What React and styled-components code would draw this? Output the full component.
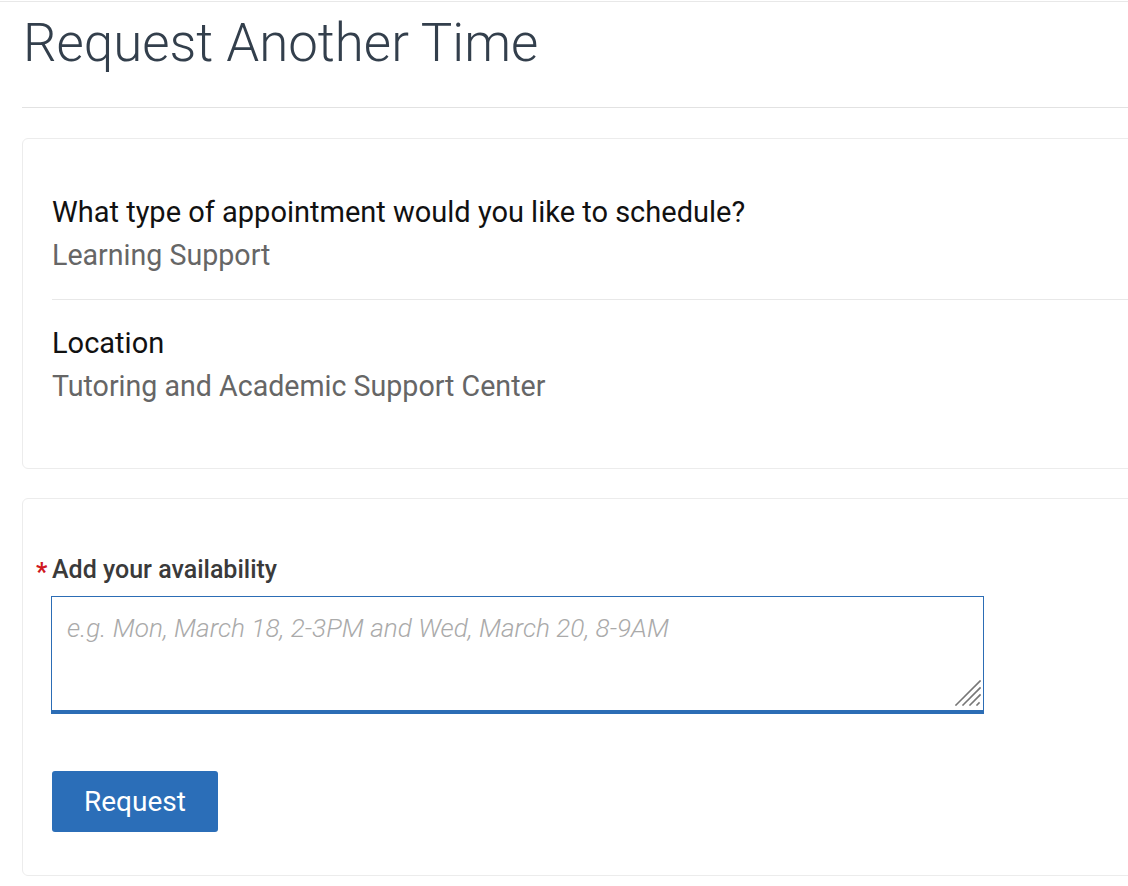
import React from "react";
import styled, { createGlobalStyle } from "styled-components";

const GlobalStyle = createGlobalStyle`
  html, body {
    margin: 0;
    padding: 0;
    background: #fff;
    overflow-x: hidden;
  }
  body {
    font-family: Roboto, "Liberation Sans", Arial, sans-serif;
  }
`;

const Page = styled.div`
  margin-top: 1px;
  border-top: 1px solid #e8e8e8;
  padding-left: 22px;
  margin-right: -60px;
`;

const Header = styled.header`
  padding: 9px 0 32px 1px;
  border-bottom: 1px solid #e2e2e2;
`;

const Title = styled.h1`
  margin: 0;
  font-size: 52.8px;
  line-height: 64px;
  font-weight: 300;
  color: #333f4c;
`;

const Card = styled.section`
  margin-top: ${p => p.$gap};
  border: 1px solid #ececec;
  border-radius: 6px;
  padding: ${p => p.$pad};
`;

const Section = styled.div`
  padding: 26px 0 27px;
  & + & {
    border-top: 1px solid #e8e8e8;
  }
`;

const Question = styled.div`
  font-size: 29px;
  line-height: 34px;
  color: #111;
`;

const Answer = styled.div`
  margin-top: 9px;
  font-size: 28.6px;
  line-height: 34px;
  color: #666;
`;

const Label = styled.label`
  display: flex;
  align-items: center;
  margin-left: -16px;
  font-size: 25px;
  line-height: 30px;
  font-weight: 500;
  color: #3a3a3a;
`;

const Star = styled.span`
  width: 16px;
  color: #d0191f;
  font-size: 25px;
  font-weight: 700;
  transform: translateY(3px);
`;

const Field = styled.div`
  position: relative;
  margin: 11px 0 0 -1px;
  width: 933px;
`;

const TextArea = styled.textarea`
  display: block;
  box-sizing: border-box;
  width: 100%;
  height: 118px;
  padding: 16px 15px 14px;
  border: 1px solid #2c6db5;
  border-bottom-width: 4px;
  border-radius: 0;
  outline: none;
  font-family: Roboto, "Liberation Sans", Arial, sans-serif;
  font-size: 26.2px;
  line-height: 1.2;
  color: #333;
  resize: none;
  &::placeholder {
    color: #aaa;
    font-style: italic;
    font-weight: 300;
  }
`;

const Grip = styled.svg`
  position: absolute;
  right: 3px;
  bottom: 8px;
  width: 26px;
  height: 26px;
  pointer-events: none;
`;

const Button = styled.button`
  margin-top: 57px;
  height: 61px;
  padding: 0 32px;
  border: none;
  border-radius: 3px;
  background: #2b6eb8;
  color: #fff;
  font-family: Roboto, "Liberation Sans", Arial, sans-serif;
  font-size: 28px;
  font-weight: 400;
  cursor: pointer;
`;

const details = [
  { q: "What type of appointment would you like to schedule?", a: "Learning Support" },
  { q: "Location", a: "Tutoring and Academic Support Center" },
];

export default function App() {
  return (
    <>
      <GlobalStyle />
      <Page>
        <Header>
          <Title>Request Another Time</Title>
        </Header>
        <Card $gap="30px" $pad="30px 0 38px 29px">
          {details.map(d => (
            <Section key={d.q}>
              <Question>{d.q}</Question>
              <Answer>{d.a}</Answer>
            </Section>
          ))}
        </Card>
        <Card $gap="29px" $pad="56px 0 43px 29px">
          <Label htmlFor="availability">
            <Star>*</Star>Add your availability
          </Label>
          <Field>
            <TextArea
              id="availability"
              placeholder="e.g. Mon, March 18, 2-3PM and Wed, March 20, 8-9AM"
            />
            <Grip viewBox="0 0 26 26">
              <g stroke="#777" strokeWidth="1.6" strokeLinecap="square">
                <line x1="1" y1="25" x2="25" y2="1" />
                <line x1="8" y1="25" x2="25" y2="8" />
                <line x1="15" y1="25" x2="25" y2="15" />
                <line x1="22" y1="25" x2="24" y2="23" />
              </g>
            </Grip>
          </Field>
          <Button>Request</Button>
        </Card>
      </Page>
    </>
  );
}
